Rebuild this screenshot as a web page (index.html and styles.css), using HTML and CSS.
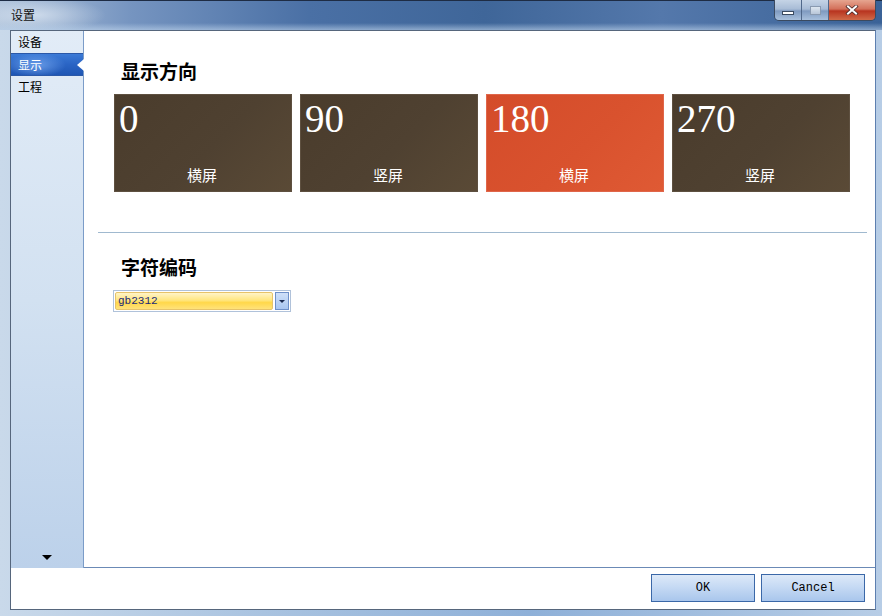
FILE: index.html
```html
<!DOCTYPE html>
<html>
<head>
<meta charset="utf-8">
<link rel="stylesheet" href="styles.css">
</head>
<body>
<div class="window">
  <div class="titlebar">
    <span class="title">设置</span>
    <div class="controls">
      <div class="ctl min"><span class="min-bar"></span></div>
      <div class="ctl max"><span class="max-box"></span></div>
      <div class="ctl close">
        <svg width="14" height="10" viewBox="0 0 14 10"><path d="M3 1.5 L11 8.5 M11 1.5 L3 8.5" stroke="#4a2a2a" stroke-width="3.6" stroke-linecap="square"/><path d="M3 1.5 L11 8.5 M11 1.5 L3 8.5" stroke="#fff" stroke-width="2" stroke-linecap="square"/></svg>
      </div>
    </div>
  </div>
  <div class="frame">
    <div class="client">
      <div class="body-row">
        <div class="sidebar">
          <div class="nav-item">设备</div>
          <div class="nav-item active">显示<span class="pointer"></span></div>
          <div class="nav-item">工程</div>
          <div class="nav-spacer"></div>
          <div class="nav-more"></div>
        </div>
        <div class="main">
          <h2 class="section-title">显示方向</h2>
          <div class="tiles">
            <div class="tile"><span class="num">0</span><span class="label">横屏</span></div>
            <div class="tile"><span class="num">90</span><span class="label">竖屏</span></div>
            <div class="tile selected"><span class="num">180</span><span class="label">横屏</span></div>
            <div class="tile"><span class="num">270</span><span class="label">竖屏</span></div>
          </div>
          <div class="separator"></div>
          <h2 class="section-title second">字符编码</h2>
          <div class="combo">
            <div class="combo-field">gb2312</div>
            <div class="combo-btn"><span class="caret"></span></div>
          </div>
        </div>
      </div>
      <div class="footer">
        <button class="btn">OK</button>
        <button class="btn">Cancel</button>
      </div>
    </div>
  </div>
</div>
</body>
</html>
```

FILE: styles.css
```css
html, body {
  margin: 0;
  padding: 0;
}
body {
  width: 882px;
  height: 616px;
  overflow: hidden;
  font-family: "Noto Sans CJK SC", "Liberation Sans", sans-serif;
}
.window {
  width: 882px;
  height: 616px;
  display: flex;
  flex-direction: column;
  background: linear-gradient(90deg, #c9d9ea 0%, #a9c3e0 30%, #8eb0d8 60%, #b7cde6 100%);
}
.titlebar {
  height: 30px;
  position: relative;
  border-top: 1px solid #1e2c44;
  box-sizing: border-box;
  background:
    radial-gradient(ellipse 70px 18px at 36px 14px, rgba(235,242,250,0.6), rgba(235,242,250,0) 100%),
    linear-gradient(90deg, #aec2da 0%, #7594c0 15%, #4a70a5 35%, #3f6699 55%, #5478ab 75%, #3a6297 100%);
  display: flex;
  align-items: center;
}
.titlebar::after {
  content: "";
  position: absolute;
  left: 0; right: 0; bottom: 0; height: 7px;
  background: linear-gradient(180deg, rgba(255,255,255,0) 0%, rgba(190,212,236,0.6) 100%);
}
.title {
  margin-left: 11px;
  margin-top: -2px;
  font-size: 12px;
  color: #111;
  position: relative;
  z-index: 1;
}
.controls {
  position: absolute;
  top: -1px;
  right: 6px;
  display: flex;
  height: 20px;
  border: 1px solid #3a4a60;
  border-top: none;
  border-radius: 0 0 5px 5px;
  overflow: hidden;
}
.ctl {
  height: 20px;
  display: flex;
  align-items: center;
  justify-content: center;
  box-sizing: border-box;
}
.ctl.min, .ctl.max {
  width: 27px;
  border-right: 1px solid #50688a;
  background: linear-gradient(180deg, #c5d4e6 0%, #a8bcd6 45%, #7f9ac0 55%, #a8c0dc 100%);
}
.min-bar {
  width: 10px;
  height: 2px;
  background: #fff;
  border: 1px solid #3a4a60;
  margin-top: 6px;
}
.max-box {
  width: 9px;
  height: 7px;
  border: 1px solid #8a9ab0;
  background: linear-gradient(#dde6f0, #b8c6d8);
}
.ctl.close {
  width: 46px;
  background: linear-gradient(180deg, #e6a590 0%, #d3705a 45%, #b83420 55%, #d06a48 100%);
}
.frame {
  flex: 1;
  padding: 0 6px 6px 10px;
  display: flex;
}
.client {
  flex: 1;
  display: flex;
  flex-direction: column;
  border: 1px solid #56667c;
  border-right-color: #5d7fb0;
  background: #fff;
}
.body-row {
  display: flex;
  height: 537px;
}
.sidebar {
  width: 72px;
  border-right: 1px solid #7b9cc8;
  background: linear-gradient(180deg, #e2ecf7 0%, #d2e1f1 50%, #bcd1ea 100%);
  display: flex;
  flex-direction: column;
  font-size: 12px;
}
.nav-item {
  height: 22px;
  line-height: 21px;
  padding-left: 7px;
  color: #000;
  position: relative;
}
.nav-item.active {
  color: #fff;
  height: 21px;
  background:
    radial-gradient(ellipse 30px 12px at 25px 11px, rgba(120,170,240,0.8), rgba(120,170,240,0) 100%),
    linear-gradient(180deg, #3b7ad6 0%, #2a64c4 50%, #1f56b4 100%);
  border-top: 1px solid #2a58a8;
  border-bottom: 1px solid #2a58a8;
}
.pointer {
  position: absolute;
  right: -1px;
  top: 5px;
  width: 0; height: 0;
  border-top: 6px solid transparent;
  border-bottom: 6px solid transparent;
  border-right: 7px solid #fff;
}
.nav-spacer { flex: 1; }
.nav-more {
  align-self: center;
  margin-bottom: 8px;
  width: 0; height: 0;
  border-left: 5px solid transparent;
  border-right: 5px solid transparent;
  border-top: 5px solid #000;
}
.main {
  flex: 1;
  border-bottom: 1px solid #6b8ab6;
  padding: 26px 8px 0 14px;
  display: flex;
  flex-direction: column;
}
.section-title {
  margin: 0 0 0 23px;
  font-size: 19px;
  font-weight: bold;
  line-height: 28px;
  height: 28px;
  color: #000;
}
.section-title.second { margin-top: 20px; }
.tiles {
  display: flex;
  gap: 8px;
  margin: 9px 0 0 16px;
}
.tile {
  width: 178px;
  height: 98px;
  box-sizing: border-box;
  border: 1px solid #5e5040;
  background: linear-gradient(135deg, #4a3c2c 0%, #4f4131 55%, #5a4a36 100%);
  color: #fff;
  display: flex;
  flex-direction: column;
  justify-content: space-between;
}
.tile.selected {
  border-color: #e0664a;
  background: linear-gradient(135deg, #d44c2a 0%, #d9522e 55%, #df5a34 100%);
}
.num {
  font-family: "Liberation Serif", serif;
  font-size: 39px;
  line-height: 40px;
  margin: 4px 0 0 4px;
}
.label {
  text-align: center;
  font-size: 15px;
  line-height: 20px;
  margin-bottom: 6px;
  margin-left: -2px;
}
.separator {
  height: 1px;
  background: #a0b9cf;
  margin: 40px 0 0 0;
}
.combo {
  margin: 9px 0 0 15px;
  width: 178px;
  height: 22px;
  box-sizing: border-box;
  border: 1px solid #b0c2da;
  display: flex;
  align-items: center;
  padding: 0 1px;
  gap: 2px;
  background: #fff;
}
.combo-field {
  width: 158px;
  height: 18px;
  box-sizing: border-box;
  border: 1px solid #e6c36a;
  border-radius: 2px;
  background: linear-gradient(180deg, #fff4c8 0%, #ffe680 45%, #ffd84a 60%, #ffe27a 100%);
  font-family: "Liberation Mono", monospace;
  font-size: 11px;
  line-height: 16px;
  color: #1a2a7a;
  padding-left: 2px;
}
.combo-btn {
  width: 14px;
  height: 18px;
  box-sizing: border-box;
  border: 1px solid #6e90c8;
  background: linear-gradient(180deg, #cfe0f8, #a9c6f0);
  display: flex;
  align-items: center;
  justify-content: center;
}
.caret {
  width: 0; height: 0;
  border-left: 3px solid transparent;
  border-right: 3px solid transparent;
  border-top: 3px solid #1a2a50;
}
.footer {
  flex: 1;
  display: flex;
  justify-content: flex-end;
  align-items: flex-start;
  gap: 6px;
  padding: 6px 10px 0 0;
}
.btn {
  width: 104px;
  height: 28px;
  box-sizing: border-box;
  border: 1px solid #3b68a8;
  background: linear-gradient(180deg, #dde9f8 0%, #c6daf4 45%, #a9c6ec 100%);
  font-family: "Liberation Mono", monospace;
  font-size: 12px;
  color: #000;
  padding: 0;
}
```
